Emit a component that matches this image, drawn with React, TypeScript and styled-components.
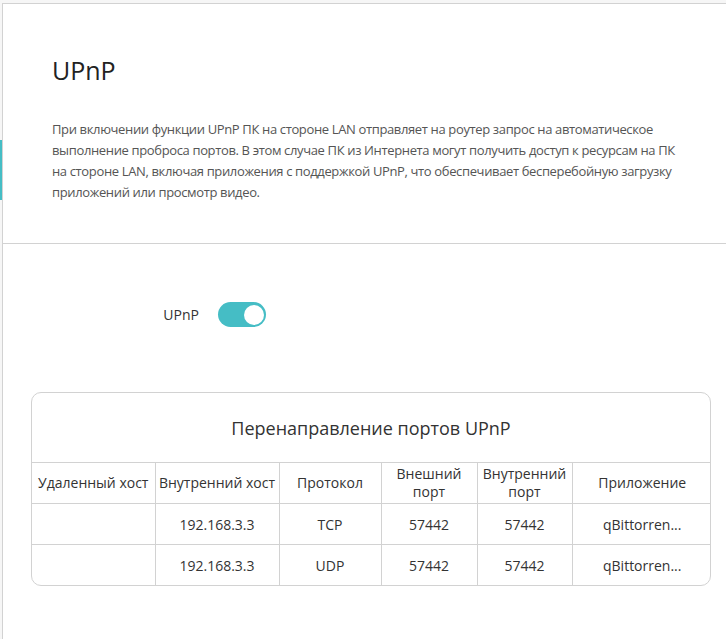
import styled, { createGlobalStyle } from "styled-components";

const GlobalStyle = createGlobalStyle`
  html, body {
    margin: 0;
    padding: 0;
    background: #fff;
  }
  body {
    font-family: "Open Sans", "Noto Sans", sans-serif;
    color: #333;
  }
`;

const Page = styled.div`
  position: relative;
  min-height: 639px;
  padding-top: 3px;
  background: #f6f6f6;
`;

const SideMark = styled.div`
  position: absolute;
  left: 0;
  top: 140px;
  width: 2px;
  height: 60px;
  background: #45bdc5;
`;

const Frame = styled.div`
  margin-left: 2px;
  min-height: 635px;
  background: #fff;
  border-top: 1px solid #d2d2d2;
  border-left: 1px solid #d2d2d2;
`;

const Intro = styled.section`
  padding: 49px 40px 40px 49px;
  border-bottom: 1px solid #d2d2d2;
`;

const Title = styled.h1`
  margin: 0;
  font-size: 25px;
  font-weight: 400;
  color: #222;
`;

const Description = styled.p`
  margin: 32px 0 0;
  max-width: 632px;
  font-size: 13px;
  line-height: 21px;
  letter-spacing: -0.36px;
  color: #555;
`;

const Settings = styled.section`
  padding: 58px 15px 40px 28px;
`;

const FieldRow = styled.div`
  display: flex;
  align-items: center;
  margin-bottom: 65px;
`;

const FieldLabel = styled.span`
  width: 168px;
  margin-right: 19px;
  text-align: right;
  font-size: 14px;
  color: #333;
`;

const Toggle = styled.button<{ $on: boolean }>`
  position: relative;
  width: 48px;
  height: 25px;
  padding: 0;
  border: none;
  border-radius: 13px;
  background: ${(p) => (p.$on ? "#45bdc5" : "#ccc")};
  cursor: pointer;

  &::after {
    content: "";
    position: absolute;
    top: 2.5px;
    right: ${(p) => (p.$on ? "2px" : "26px")};
    width: 20px;
    height: 20px;
    border-radius: 50%;
    background: #fff;
  }
`;

const Card = styled.div`
  border: 1px solid #d2d2d2;
  border-radius: 10px;
  overflow: hidden;
`;

const CardTitle = styled.div`
  height: 69px;
  display: flex;
  align-items: center;
  justify-content: center;
  font-size: 18px;
  color: #333;
`;

const Table = styled.table`
  width: 100%;
  table-layout: fixed;
  border-collapse: collapse;
  font-size: 14px;
  color: #333;
`;

const Th = styled.th`
  height: 40px;
  padding: 0 2px;
  font-weight: 400;
  line-height: 18px;
  text-align: center;
  border-top: 1px solid #d2d2d2;
  border-right: 1px solid #d2d2d2;

  &:last-child {
    border-right: none;
  }
`;

const Td = styled.td`
  height: 40px;
  padding: 0 2px;
  text-align: center;
  border-top: 1px solid #d2d2d2;
  border-right: 1px solid #d2d2d2;
  white-space: nowrap;

  &:last-child {
    border-right: none;
  }
`;

const columns = [
  { title: "Удаленный хост", width: 123 },
  { title: "Внутренний хост", width: 124 },
  { title: "Протокол", width: 102 },
  { title: "Внешний порт", width: 96 },
  { title: "Внутренний порт", width: 95 },
  { title: "Приложение", width: 140 },
];

const rules = [
  { remote: "", host: "192.168.3.3", proto: "TCP", ext: "57442", int: "57442", app: "qBittorren..." },
  { remote: "", host: "192.168.3.3", proto: "UDP", ext: "57442", int: "57442", app: "qBittorren..." },
];

export default function App() {
  return (
    <>
      <GlobalStyle />
      <Page>
        <SideMark />
        <Frame>
          <Intro>
            <Title>UPnP</Title>
            <Description>
              При включении функции UPnP ПК на стороне LAN отправляет на роутер
              запрос на автоматическое выполнение проброса портов. В этом случае
              ПК из Интернета могут получить доступ к ресурсам на ПК на стороне
              LAN, включая приложения с поддержкой UPnP, что обеспечивает
              бесперебойную загрузку приложений или просмотр видео.
            </Description>
          </Intro>
          <Settings>
            <FieldRow>
              <FieldLabel>UPnP</FieldLabel>
              <Toggle $on={true} aria-label="UPnP" />
            </FieldRow>
            <Card>
              <CardTitle>Перенаправление портов UPnP</CardTitle>
              <Table>
                <colgroup>
                  {columns.map((c) => (
                    <col key={c.title} style={{ width: c.width }} />
                  ))}
                </colgroup>
                <thead>
                  <tr>
                    {columns.map((c) => (
                      <Th key={c.title}>{c.title}</Th>
                    ))}
                  </tr>
                </thead>
                <tbody>
                  {rules.map((r, i) => (
                    <tr key={i}>
                      <Td>{r.remote}</Td>
                      <Td>{r.host}</Td>
                      <Td>{r.proto}</Td>
                      <Td>{r.ext}</Td>
                      <Td>{r.int}</Td>
                      <Td>{r.app}</Td>
                    </tr>
                  ))}
                </tbody>
              </Table>
            </Card>
          </Settings>
        </Frame>
      </Page>
    </>
  );
}
